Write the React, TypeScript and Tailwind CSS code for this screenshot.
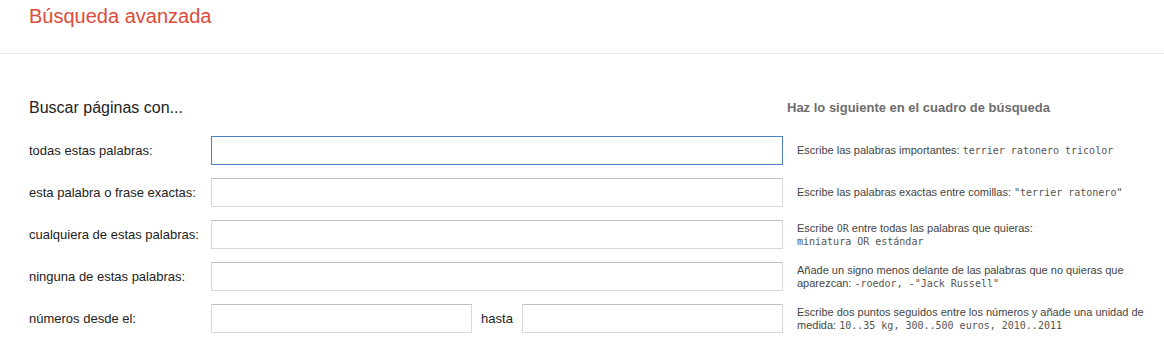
import type { ReactNode } from 'react';

const SANS = "font-['Liberation_Sans',Arial,sans-serif]";

function Mono({ children }: { children: ReactNode }) {
  return <span className="font-['DejaVu_Sans_Mono','Liberation_Mono',monospace] text-[10px] text-[#555]">{children}</span>;
}

const inputBase = 'h-[29px] border border-[#d9d9d9] border-t-[#c0c0c0] bg-white outline-none px-2 text-[13px]';

function Row({ label, help, focused, children }: { label: string; help: ReactNode; focused?: boolean; children?: ReactNode }) {
  return (
    <div className="flex items-center h-[29px]">
      <label className="w-[182px] shrink-0 text-[13px] text-[#222]">{label}</label>
      <div className="w-[572px] shrink-0 flex items-center">
        {children ?? (
          <input
            className={
              focused
                ? 'w-full h-[29px] border border-[#4d7fd0] bg-white outline-none px-2 text-[13px]'
                : `w-full ${inputBase}`
            }
          />
        )}
      </div>
      <div className="ml-[14px] w-[360px] text-[11px] leading-[13px] text-[#444]">{help}</div>
    </div>
  );
}

export default function App() {
  return (
    <div className={`${SANS} bg-white w-[1164px] h-[355px] overflow-hidden`}>
      <header className="h-[54px] border-b border-[#ebebeb] pl-[29px] pt-[5px]">
        <h1 className="text-[20px] leading-[23px] text-[#dd4b39]">Búsqueda avanzada</h1>
      </header>

      <div className="pl-[29px]">
        <div className="flex items-center h-[20px] mt-[44px]">
          <h2 className="w-[758px] shrink-0 text-[16px] text-[#222]">Buscar páginas con...</h2>
          <h3 className="text-[13px] font-bold text-[#6d6d6d]">Haz lo siguiente en el cuadro de búsqueda</h3>
        </div>

        <div className="flex flex-col gap-[13px] mt-[18px]">
          <Row
            label="todas estas palabras:"
            focused
            help={<>Escribe las palabras importantes: <Mono>terrier ratonero tricolor</Mono></>}
          />
          <Row
            label="esta palabra o frase exactas:"
            help={<>Escribe las palabras exactas entre comillas: <Mono>"terrier ratonero"</Mono></>}
          />
          <Row
            label="cualquiera de estas palabras:"
            help={
              <>
                Escribe <Mono>OR</Mono> entre todas las palabras que quieras:
                <br />
                <Mono>miniatura OR estándar</Mono>
              </>
            }
          />
          <Row
            label="ninguna de estas palabras:"
            help={
              <>
                Añade un signo menos delante de las palabras que no quieras que
                <br />
                aparezcan: <Mono>-roedor, -"Jack Russell"</Mono>
              </>
            }
          />
          <Row
            label="números desde el:"
            help={
              <>
                Escribe dos puntos seguidos entre los números y añade una unidad de
                <br />
                medida: <Mono>10..35 kg, 300..500 euros, 2010..2011</Mono>
              </>
            }
          >
            <input className={`w-[261px] ${inputBase}`} />
            <span className="w-[50px] text-center text-[13px] text-[#222]">hasta</span>
            <input className={`w-[261px] ${inputBase}`} />
          </Row>
        </div>
      </div>
    </div>
  );
}
